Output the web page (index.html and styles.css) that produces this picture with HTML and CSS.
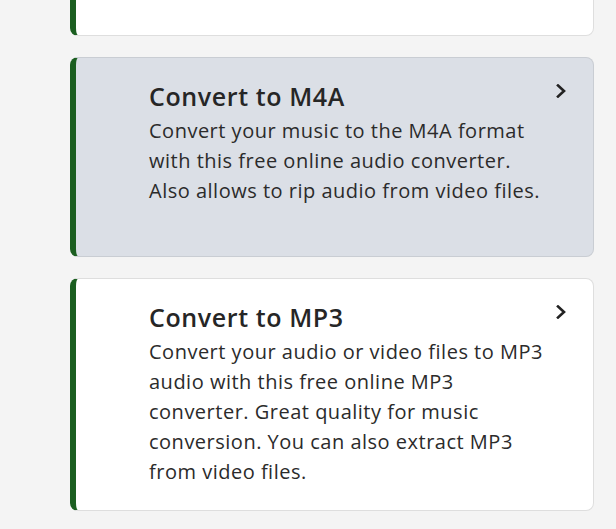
FILE: index.html
```html
<!DOCTYPE html>
<html lang="en">
<head>
    <meta charset="UTF-8">
    <meta name="viewport" content="width=device-width, initial-scale=1.0">
    <title>Audio Converters</title>
    <link rel="stylesheet" href="styles.css">
</head>
<body>
    <div class="card-list">
        <!-- previous card, scrolled mostly out of view -->
        <a class="card card-first" href="#"></a>

        <a class="card card-hover" href="#">
            <div class="card-body">
                <div class="card-title">Convert to M4A</div>
                <div class="card-text">Convert your music to the M4A format with this free online audio converter. Also allows to rip audio from video files.</div>
            </div>
            <svg class="chevron" viewBox="0 0 10 14" width="10" height="14"><path d="M2 1.5 L8 7 L2 12.5"/></svg>
        </a>

        <a class="card" href="#">
            <div class="card-body">
                <div class="card-title">Convert to MP3</div>
                <div class="card-text">Convert your audio or video files to MP3 audio with this free online MP3 converter. Great quality for music conversion. You can also extract MP3 from video files.</div>
            </div>
            <svg class="chevron" viewBox="0 0 10 14" width="10" height="14"><path d="M2 1.5 L8 7 L2 12.5"/></svg>
        </a>
    </div>
</body>
</html>
```

FILE: styles.css
```css
body {
    margin: 0;
    padding: 0;
    font-family: "Open Sans", Arial, sans-serif;
    background-color: #f4f4f4;
    color: #2b2b2b;
    overflow: hidden;
}

.card-list {
    display: flex;
    flex-direction: column;
    gap: 21px;
    padding: 0 22px 0 70px;
}

.card {
    display: flex;
    align-items: flex-start;
    gap: 10px;
    box-sizing: border-box;
    min-height: 200px;
    padding: 24px 27px 23px 73px;
    background-color: #ffffff;
    border: 1px solid #dedede;
    border-left: 6px solid #1b5e20;
    border-radius: 8px;
    color: inherit;
    text-decoration: none;
}

.card-first {
    margin-top: -164px;
}

.card-hover {
    background-color: #dbdfe6;
    border-color: #c9cdd3;
    border-left-color: #1b5e20;
}

.card-body {
    flex: 1;
}

.card-title {
    font-size: 25px;
    font-weight: 600;
    letter-spacing: 0.6px;
    line-height: 28px;
    margin-bottom: 6px;
    color: #262626;
}

.card-text {
    font-size: 20px;
    letter-spacing: 0.5px;
    line-height: 30px;
}

.chevron {
    flex-shrink: 0;
    margin-top: 2px;
    fill: none;
    stroke: #222;
    stroke-width: 2.6;
    stroke-linecap: square;
    stroke-linejoin: miter;
}
```
